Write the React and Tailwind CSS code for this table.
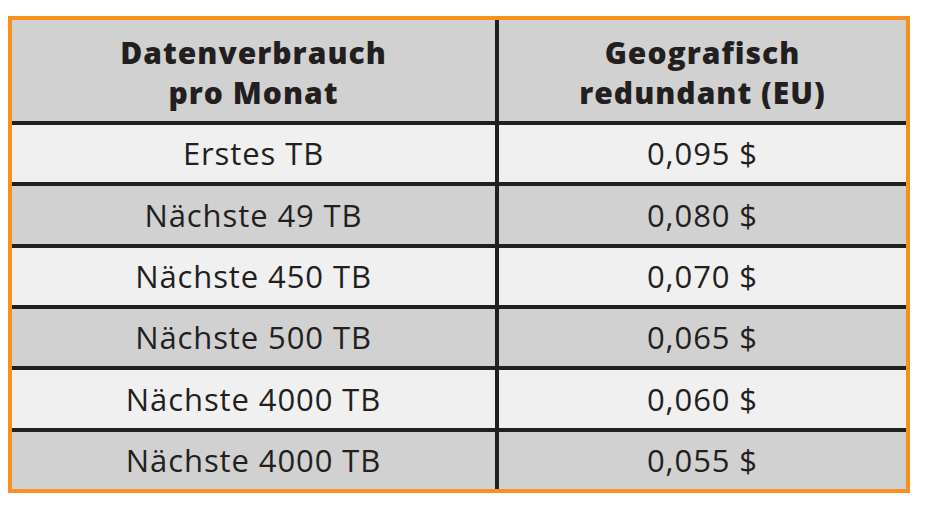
import React from 'react';

// Preise pro TB, geografisch redundant (EU)
const ROWS = [
  ['Erstes TB', '0,095 $'],
  ['Nächste 49 TB', '0,080 $'],
  ['Nächste 450 TB', '0,070 $'],
  ['Nächste 500 TB', '0,065 $'],
  ['Nächste 4000 TB', '0,060 $'],
  ['Nächste 4000 TB', '0,055 $'],
];

const PriceTable = () => {
  return (
    <div className="w-[932px] h-[510px] bg-white pt-4 pl-2" style={{ fontFamily: '"Open Sans", "Liberation Sans", sans-serif' }}>
      <div className="w-[902px] h-[477px] border-4 border-[#f7901e] bg-[#d1d1d1] flex flex-col text-[#231f20]">
        {/* Kopfzeile */}
        <div className="h-[101px] grid grid-cols-[483px_4px_1fr] shrink-0">
          <div className="flex items-center justify-center text-center font-extrabold text-[30px] leading-[40px] tracking-[1px] pt-1">
            Datenverbrauch<br />pro Monat
          </div>
          <div className="bg-[#231f20]" />
          <div className="flex items-center justify-center text-center font-extrabold text-[30px] leading-[40px] tracking-[1px] pt-1">
            Geografisch<br />redundant (EU)
          </div>
        </div>
        {ROWS.map(([a, b], i) => (
          <div key={i} className="flex-1 flex flex-col">
            <div className="h-[4px] bg-[#231f20] shrink-0" />
            <div className={`flex-1 grid grid-cols-[483px_4px_1fr] ${i % 2 === 0 ? 'bg-[#f0f0f0]' : 'bg-[#d1d1d1]'}`}>
              <div className="flex items-center justify-center text-[31px] tracking-[0.9px]">{a}</div>
              <div className="bg-[#231f20]" />
              <div className="flex items-center justify-center text-[31px] tracking-[0.9px]">{b}</div>
            </div>
          </div>
        ))}
      </div>
    </div>
  );
};

export default PriceTable;
